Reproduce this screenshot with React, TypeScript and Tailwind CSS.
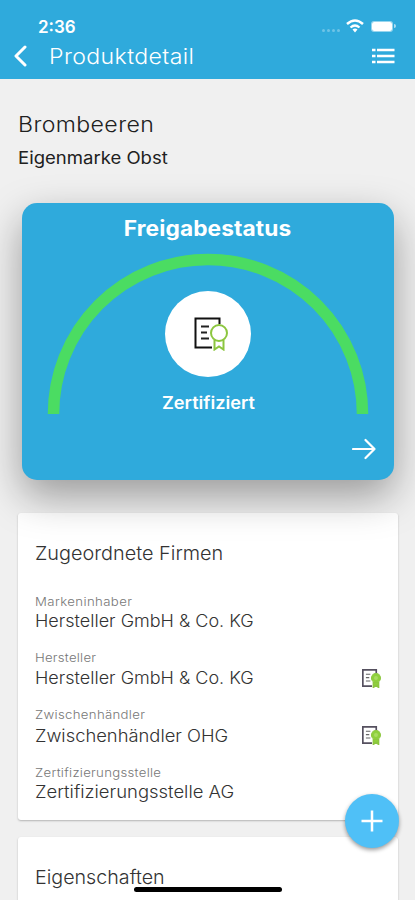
import React from 'react';

type CertificateProps = { small?: boolean };

function Certificate({ small = false }: CertificateProps) {
  return (
    <svg viewBox="0 0 34 34" className={small ? 'h-[19px] w-[19px] shrink-0' : 'h-[34px] w-[34px]'} fill="none">
      <path
        d="M25.5 7V1.5H1.5V30.500H18"
        stroke={small ? '#55505f' : '#111'}
        strokeWidth={small ? 3 : 2}
      />
      <path d="M7 9.500H15M7 15.500H13M7 21.500H15" stroke={small ? '#666' : '#222'} strokeWidth="2" />
      <path d="M20.500 23V32.500L25 29.500L29.500 32.500V23" fill={small ? '#8fd13c' : 'none'} stroke="#8cc63f" strokeWidth={small ? 3 : 2} />
      <circle cx="25" cy="16" r="8" fill={small ? '#8fd13c' : '#fff'} stroke="#8cc63f" strokeWidth="2" />
      {small && <circle cx="25" cy="16" r="3.500" fill="#a9dc62" />}
    </svg>
  );
}

const companies = [
  { label: 'Markeninhaber', name: 'Hersteller GmbH & Co. KG', certified: false, box: 'h-[56px]', labelStyle: 'tracking-[0.35px]', nameStyle: 'scale-x-[1.06]' },
  { label: 'Hersteller', name: 'Hersteller GmbH & Co. KG', certified: true, box: 'h-[57px]', labelStyle: 'tracking-[0.2px]', nameStyle: 'scale-x-[1.06] mt-[1px]' },
  { label: 'Zwischenhändler', name: 'Zwischenhändler OHG', certified: true, box: 'h-[58px]', labelStyle: 'tracking-[0.28px]', nameStyle: 'scale-x-[1.08] mt-[2px]' },
  { label: 'Zertifizierungsstelle', name: 'Zertifizierungsstelle AG', certified: false, box: 'h-[56px]', labelStyle: 'tracking-[0.25px]', nameStyle: 'scale-x-[1.085]' },
];

function Header() {
  return (
    <header className="h-[79px] bg-[#2faadc] text-white">
      <div className="flex h-[38px] items-end justify-between pl-[38px] pr-[19px]">
        <span className="text-[17px] font-semibold leading-[22px]">2:36</span>
        <div className="flex h-[24px] items-center">
          <div className="mr-[6px] mt-[9px] flex gap-[2px] opacity-30">
            <i className="h-[3px] w-[3px] rounded-full bg-white" />
            <i className="h-[3px] w-[3px] rounded-full bg-white" />
            <i className="h-[3px] w-[3px] rounded-full bg-white" />
            <i className="h-[3px] w-[3px] rounded-full bg-white" />
          </div>
          <svg viewBox="0 0 18 14" className="mr-[7px] h-[14px] w-[18px]" fill="none" stroke="white">
            <path d="M1 5Q9 -2 17 5" strokeWidth="2.500" />
            <path d="M4.500 8.500Q9 4.500 13.500 8.500" strokeWidth="2.300" />
            <path d="M6.500 10.500Q9 8.500 11.500 10.500L9 13.500Z" fill="white" stroke="none" />
          </svg>
          <div className="h-[11px] w-[22px] rounded-[3px] border border-white/50 bg-white bg-clip-padding" />
          <div className="ml-[1px] h-[4px] w-[2px] rounded-r bg-white/60" />
        </div>
      </div>
      <div className="flex h-[36px] items-center pl-[14px] pr-[20px]">
        <svg viewBox="0 0 13 22" className="h-[22px] w-[13px]" fill="none" stroke="white" strokeWidth="3" strokeLinecap="round" strokeLinejoin="round">
          <path d="M11 2L2 11L11 20" />
        </svg>
        <h1 className="ml-[22px] mt-[2px] origin-left scale-x-[1.1] text-[21px] font-light leading-[28px] tracking-[0.35px]">Produktdetail</h1>
        <svg viewBox="0 0 23 16" className="ml-auto h-[16px] w-[23px]" stroke="white" strokeWidth="2.500">
          <path d="M0 2H3.500M5 2H22.500M0 8H3.500M5 8H22.500M0 14H3.500M5 14H22.500" />
        </svg>
      </div>
    </header>
  );
}

function StatusCard() {
  return (
    <section className="relative z-10 mx-auto h-[277px] w-[372px] rounded-[15px] bg-[#2faadc] text-white shadow-[0_16px_40px_rgba(0,0,0,0.36)]">
      <div className="grid">
        <svg viewBox="0 0 372 277" className="col-start-1 row-start-1 h-[277px] w-[372px]" fill="none">
          <path d="M31.500 211A154.500 154.500 0 0 1 340.500 211" stroke="#4bdc62" strokeWidth="11.500" />
        </svg>
        <div className="col-start-1 row-start-1 flex flex-col items-center">
          <h2 className="mt-[12px] scale-x-[1.08] text-[21px] font-bold leading-[28px] tracking-[0.1px]">Freigabestatus</h2>
          <div className="mt-[48px] flex h-[86px] w-[86px] items-center justify-center rounded-full bg-white pl-[7px]">
            <Certificate />
          </div>
          <p className="ml-[2px] mt-[14px] scale-x-[1.07] text-[17px] font-semibold leading-[24px]">Zertifiziert</p>
          <svg viewBox="0 0 24 22" className="mr-[18px] mt-[23px] h-[22px] w-[24px] self-end" fill="none" stroke="white" strokeWidth="2.200" strokeLinecap="round" strokeLinejoin="round">
            <path d="M1 11H22.500M13.500 2L22.500 11L13.500 20" />
          </svg>
        </div>
      </div>
    </section>
  );
}

export default function App() {
  return (
    <main className="relative h-[900px] w-[415px] overflow-hidden bg-[#f0f0f0] font-['Inter','Noto_Sans',sans-serif]">
      <Header />
      <div className="h-[124px] pl-[18px] pt-[32px] text-[#202020]">
        <h2 className="w-max origin-left scale-x-[1.1] text-[21px] font-light leading-[28px] tracking-[0.35px]">Brombeeren</h2>
        <p className="mt-[7px] w-max origin-left scale-x-[1.09] text-[17px] font-normal leading-[24px]">Eigenmarke Obst</p>
      </div>
      <StatusCard />
      <section className="mx-[18px] mr-[17px] mt-[33px] h-[307px] rounded-[3px] bg-white pl-[17px] pr-[17px] pt-[28px] shadow-[0_1px_2px_rgba(0,0,0,0.25)]">
        <h2 className="mb-[27px] w-max origin-left scale-x-[1.045] text-[19px] font-light leading-[26px] text-[#333]">Zugeordnete Firmen</h2>
        {companies.map((company, index) => (
          <div key={index} className={`flex ${company.box}`}>
            <div className="min-w-0 flex-1">
              <p className={`w-max origin-left scale-x-[1.1] text-[12px] font-light leading-[16px] text-[#777] ${company.labelStyle}`}>{company.label}</p>
              <p className={`w-max origin-left text-[17px] font-light leading-[22px] text-[#333] ${company.nameStyle}`}>{company.name}</p>
            </div>
            {company.certified && <div className="mt-[19px]"><Certificate small /></div>}
          </div>
        ))}
      </section>
      <section className="mx-[18px] mr-[17px] mt-[17px] h-[80px] rounded-[3px] bg-white pl-[17px] pt-[28px] shadow-[0_1px_2px_rgba(0,0,0,0.25)]">
        <h2 className="w-max origin-left scale-x-[1.035] text-[19px] font-light leading-[26px] text-[#333]">Eigenschaften</h2>
      </section>
      <button aria-label="Hinzufügen" className="absolute left-[345px] top-[794px] z-20 flex h-[54px] w-[54px] items-center justify-center rounded-full bg-[#4fc0f7] shadow-[0_2px_4px_rgba(0,0,0,0.4)]">
        <svg viewBox="0 0 22 22" className="h-[22px] w-[22px]" stroke="white" strokeWidth="2.500">
          <path d="M11 0.500V21.500M0.500 11H21.500" />
        </svg>
      </button>
      <div className="absolute left-[134px] top-[887px] z-20 h-[5px] w-[148px] rounded-full bg-black" />
    </main>
  );
}
